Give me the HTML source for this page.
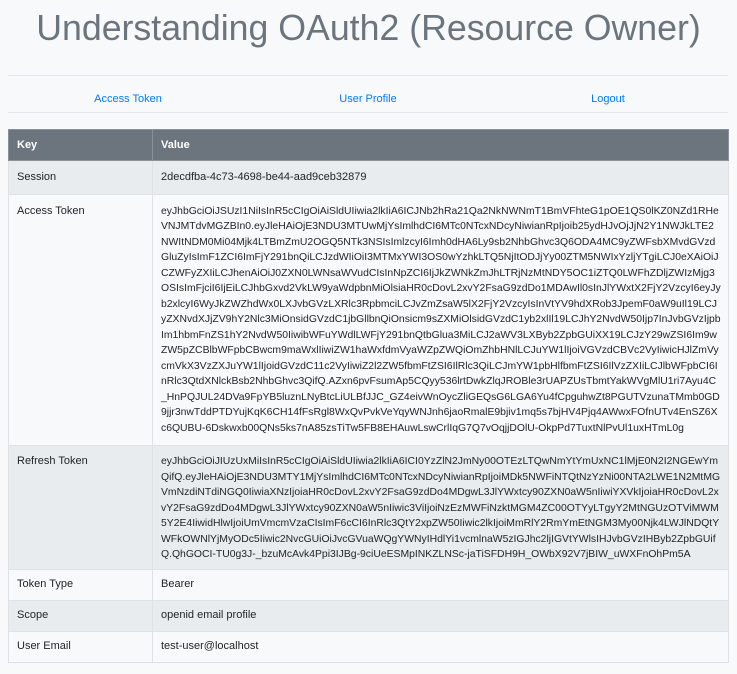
<!DOCTYPE html>
<html><head><meta charset="utf-8"><style>
html,body{margin:0;padding:0;background:#f8f9fa;}
body{width:737px;height:674px;overflow:hidden;font-family:"Liberation Sans",Arial,sans-serif;color:#212529;font-size:11px;}
h1{margin:0;position:absolute;left:0;top:5px;width:737px;text-align:center;font-weight:400;font-size:35.7px;line-height:46px;color:#6c757d;}
.hr{position:absolute;left:8px;width:720px;height:1px;background:#e4e6e9;}
.nav{position:absolute;left:8px;top:91px;width:720px;display:flex;}
.nav a{flex:1;text-align:center;color:#007bff;text-decoration:none;font-size:11px;line-height:16px;}
table{position:absolute;left:8px;top:129px;width:721px;border-collapse:collapse;table-layout:fixed;}
td,th{border:1px solid #dee2e6;text-align:left;vertical-align:top;padding:7.5px 8px;line-height:15px;overflow:hidden;}
th{background:#6c757d;color:#fff;font-weight:bold;border-color:#8a9199;padding:7.5px 8px;}
tr.o td{background:#e9ecef;}
.t{white-space:nowrap;font-size:10.4px;line-height:15.5px;padding-top:8.5px;padding-bottom:8.5px;}
</style></head><body>
<h1>Understanding OAuth2 (Resource Owner)</h1>
<div class="hr" style="top:75px"></div>
<div class="nav"><a>Access Token</a><a>User Profile</a><a>Logout</a></div>
<div class="hr" style="top:112px"></div>
<table>
<colgroup><col style="width:144px"><col></colgroup>
<tr><th>Key</th><th>Value</th></tr>
<tr class="o"><td style="padding:9px 8px">Session</td><td style="padding:9px 8px">2decdfba-4c73-4698-be44-aad9ceb32879</td></tr>
<tr><td class="t" style="font-size:11px">Access Token</td><td class="t">eyJhbGciOiJSUzI1NiIsInR5cCIgOiAiSldUIiwia2lkIiA6ICJNb2hRa21Qa2NkNWNmT1BmVFhteG1pOE1QS0lKZ0NZd1RHe<br>VNJMTdvMGZBIn0.eyJleHAiOjE3NDU3MTUwMjYsImlhdCI6MTc0NTcxNDcyNiwianRpIjoib25ydHJvOjJjN2Y1NWJkLTE2<br>NWItNDM0Mi04Mjk4LTBmZmU2OGQ5NTk3NSIsImlzcyI6Imh0dHA6Ly9sb2NhbGhvc3Q6ODA4MC9yZWFsbXMvdGVzd<br>GluZyIsImF1ZCI6ImFjY291bnQiLCJzdWIiOiI3MTMxYWI3OS0wYzhkLTQ5NjItODJjYy00ZTM5NWIxYzljYTgiLCJ0eXAiOiJ<br>CZWFyZXIiLCJhenAiOiJ0ZXN0LWNsaWVudCIsInNpZCI6IjJkZWNkZmJhLTRjNzMtNDY5OC1iZTQ0LWFhZDljZWIzMjg3<br>OSIsImFjciI6IjEiLCJhbGxvd2VkLW9yaWdpbnMiOlsiaHR0cDovL2xvY2FsaG9zdDo1MDAwIl0sInJlYWxtX2FjY2VzcyI6eyJy<br>b2xlcyI6WyJkZWZhdWx0LXJvbGVzLXRlc3RpbmciLCJvZmZsaW5lX2FjY2VzcyIsInVtYV9hdXRob3JpemF0aW9uIl19LCJ<br>yZXNvdXJjZV9hY2Nlc3MiOnsidGVzdC1jbGllbnQiOnsicm9sZXMiOlsidGVzdC1yb2xlIl19LCJhY2NvdW50Ijp7InJvbGVzIjpb<br>Im1hbmFnZS1hY2NvdW50IiwibWFuYWdlLWFjY291bnQtbGlua3MiLCJ2aWV3LXByb2ZpbGUiXX19LCJzY29wZSI6Im9w<br>ZW5pZCBlbWFpbCBwcm9maWxlIiwiZW1haWxfdmVyaWZpZWQiOmZhbHNlLCJuYW1lIjoiVGVzdCBVc2VyIiwicHJlZmVy<br>cmVkX3VzZXJuYW1lIjoidGVzdC11c2VyIiwiZ2l2ZW5fbmFtZSI6IlRlc3QiLCJmYW1pbHlfbmFtZSI6IlVzZXIiLCJlbWFpbCI6I<br>nRlc3QtdXNlckBsb2NhbGhvc3QifQ.AZxn6pvFsumAp5CQyy536lrtDwkZlqJROBle3rUAPZUsTbmtYakWVgMlU1ri7Ayu4C<br>_HnPQJUL24DVa9FpYB5luznLNyBtcLiULBfJJC_GZ4eivWnOycZliGEQsG6LGA6Yu4fCpguhwZt8PGUTVzunaTMmb0GD<br>9jjr3nwTddPTDYujKqK6CH14fFsRgl8WxQvPvkVeYqyWNJnh6jaoRmalE9bjiv1mq5s7bjHV4Pjq4AWwxFOfnUTv4EnSZ6X<br>c6QUBU-6Dskwxb00QNs5ks7nA85zsTiTw5FB8EHAuwLswCrlIqG7Q7vOqjjDOlU-OkpPd7TuxtNlPvUl1uxHTmL0g</td></tr>
<tr class="o"><td class="t" style="font-size:11px;padding-bottom:6px">Refresh Token</td><td class="t" style="padding-bottom:6px">eyJhbGciOiJIUzUxMiIsInR5cCIgOiAiSldUIiwia2lkIiA6ICI0YzZlN2JmNy00OTEzLTQwNmYtYmUxNC1lMjE0N2I2NGEwYm<br>QifQ.eyJleHAiOjE3NDU3MTY1MjYsImlhdCI6MTc0NTcxNDcyNiwianRpIjoiMDk5NWFiNTQtNzYzNi00NTA2LWE1N2MtMG<br>VmNzdiNTdiNGQ0IiwiaXNzIjoiaHR0cDovL2xvY2FsaG9zdDo4MDgwL3JlYWxtcy90ZXN0aW5nIiwiYXVkIjoiaHR0cDovL2x<br>vY2FsaG9zdDo4MDgwL3JlYWxtcy90ZXN0aW5nIiwic3ViIjoiNzEzMWFiNzktMGM4ZC00OTYyLTgyY2MtNGUzOTViMWM<br>5Y2E4IiwidHlwIjoiUmVmcmVzaCIsImF6cCI6InRlc3QtY2xpZW50Iiwic2lkIjoiMmRlY2RmYmEtNGM3My00Njk4LWJlNDQtY<br>WFkOWNlYjMyODc5Iiwic2NvcGUiOiJvcGVuaWQgYWNyIHdlYi1vcmlnaW5zIGJhc2ljIGVtYWlsIHJvbGVzIHByb2ZpbGUif<br>Q.QhGOCI-TU0g3J-_bzuMcAvk4Ppi3IJBg-9ciUeESMpINKZLNSc-jaTiSFDH9H_OWbX92V7jBIW_uWXFnOhPm5A</td></tr>
<tr><td>Token Type</td><td>Bearer</td></tr>
<tr class="o"><td>Scope</td><td>openid email profile</td></tr>
<tr><td>User Email</td><td>test-user@localhost</td></tr>
</table>
</body></html>
